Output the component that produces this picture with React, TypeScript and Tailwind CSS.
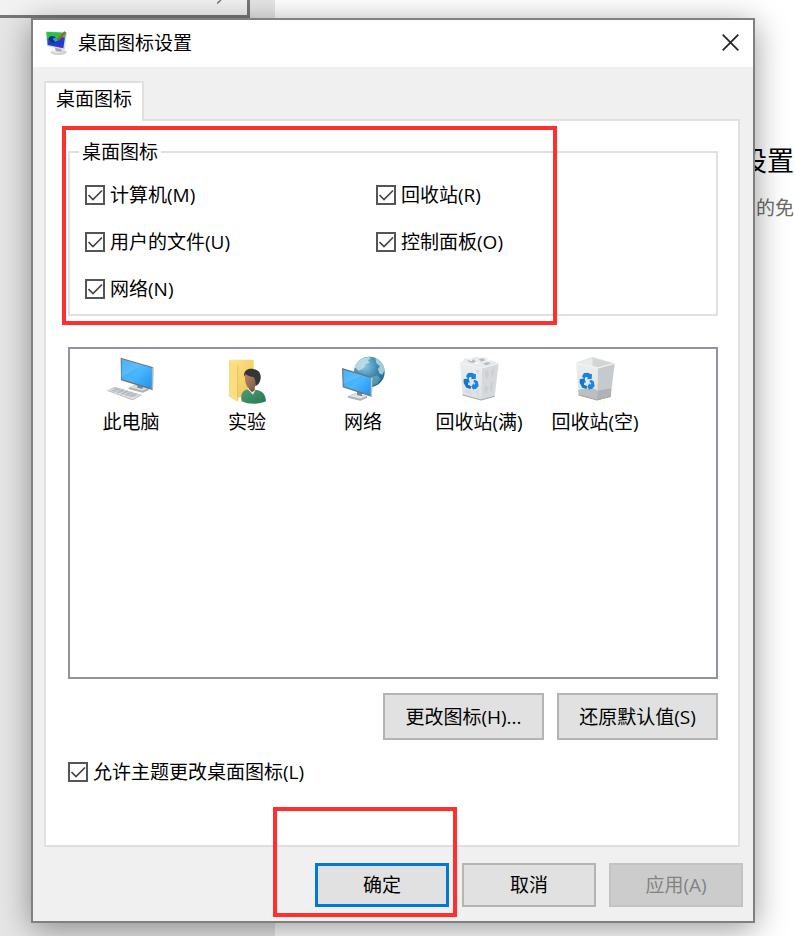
import { useState } from 'react';
import type { ReactNode } from 'react';

const desktopIcons = [
  { id: 'computer', label: '计算机(M)' },
  { id: 'recycle', label: '回收站(R)' },
  { id: 'files', label: '用户的文件(U)' },
  { id: 'control', label: '控制面板(O)' },
  { id: 'network', label: '网络(N)' },
];

function TitleIcon() {
  return (
    <svg width="24" height="26" viewBox="135 86 72 78" aria-hidden="true">
      <defs>
        <linearGradient id="title-screen" x1="0" y1="0" x2="1" y2="1">
          <stop offset="0" stopColor="#1c9a4a" />
          <stop offset="0.45" stopColor="#1a3fc0" />
          <stop offset="1" stopColor="#3a35e0" />
        </linearGradient>
      </defs>
      <ellipse cx="176" cy="153" rx="24" ry="8" fill="#cfcfcf" />
      <ellipse cx="173" cy="150" rx="17" ry="5" fill="#ececec" />
      <path d="M164 138l20 4 2 9-18-1z" fill="#a9a9a9" />
      <path d="M137 90l64 2-7 54-53-12z" fill="#d4dadb" />
      <path d="M140 93l57 2-7 46-47-10z" fill="url(#title-screen)" />
      <path d="M140 93l57 2-2 14-15-2-12 9-12-6-15 2z" fill="#25c83b" />
      <path d="M148 107c8-6 18-2 19 3-9-1-9 7-1 9 5 2 0 7-7 5-10-2-16-11-11-17z" fill="#14289a" />
      <path d="M158 112l10-2 8 7-11 5z" fill="#23a4c8" />
      <path d="M171 114l22-24 5 3-20 24z" fill="#b8562a" />
    </svg>
  );
}

function Screen({ id, points }: { id: string; points: [string, string, string] }) {
  return (
    <>
      <defs>
        <linearGradient id={id} x1="0" y1="0" x2="1" y2="1">
          <stop offset="0" stopColor="#2da5f6" />
          <stop offset="0.5" stopColor="#4ab7ff" />
          <stop offset="1" stopColor="#1e94ed" />
        </linearGradient>
      </defs>
      <polygon points={points[0]} fill="#69757f" />
      <polygon points={points[1]} fill={`url(#${id})`} />
      <polygon points={points[2]} fill="#fff" opacity="0.13" />
    </>
  );
}

function ComputerIcon() {
  return (
    <svg width="48" height="48" viewBox="48 33 144 144" aria-hidden="true">
      <path d="M113 128l18-9 42 11v6l-18 7-42-11z" fill="#aab1b6" />
      <path d="M115 127l17-7 39 10-17 7z" fill="#d9dddf" />
      <path d="M139 119l16 4v9l-16-4z" fill="#7f898f" />
      <Screen
        id="computer-screen"
        points={[
          '89,38 187,67 186,136 90,106',
          '92,42 183,69 182,130 92,102',
          '92,42 155,61 92,95',
        ]}
      />
      <path d="M183 68l4-1-1 69-4-3z" fill="#aeb9c0" />
      <path d="M48 137l22-12 83 25-28 16z" fill="#b5babd" />
      <path d="M51 136l19-9 79 23-24 13z" fill="#e3e5e6" />
      <path
        d="M58 134l71 22M64 131l72 22M70 129l72 22M65 140l18-10M78 144l20-11M91 148l20-11M104 152l20-11M116 156l20-11"
        stroke="#a0a6aa"
        strokeWidth="2"
        fill="none"
      />
    </svg>
  );
}

function UserFolderIcon() {
  return (
    <svg width="48" height="48" viewBox="399 33 144 144" aria-hidden="true">
      <defs>
        <linearGradient id="folder-back" x1="0" y1="0" x2="1" y2="1">
          <stop offset="0" stopColor="#ffe592" />
          <stop offset="1" stopColor="#efc14d" />
        </linearGradient>
        <linearGradient id="user-coat" x1="0" y1="0" x2="1" y2="1">
          <stop offset="0" stopColor="#529b74" />
          <stop offset="1" stopColor="#237a52" />
        </linearGradient>
        <linearGradient id="user-face" x1="0" y1="0" x2="1" y2="1">
          <stop offset="0" stopColor="#b48a68" />
          <stop offset="1" stopColor="#7f5c45" />
        </linearGradient>
      </defs>
      <path d="M418 44h73v113h-54l-19-3z" fill="url(#folder-back)" />
      <path d="M417 45l25 14v112l-25-17z" fill="#fbdc80" />
      <path d="M442 59l3 2v101l-3 9z" fill="#e6bd5a" />
      <path d="M455 169c-4-14 0-30 11-34l16-4 18 4c18 3 27 14 28 34-20 10-53 10-73 0z" fill="url(#user-coat)" />
      <path d="M472 131l27-1-10 19z" fill="#e4ece6" />
      <path d="M477 123h17v13l-8 6-9-10z" fill="#7d543b" />
      <path d="M465 91c1-12 33-12 35 4 1 20-4 37-16 37-13 0-20-17-19-41z" fill="url(#user-face)" />
      <path d="M462 88c3-15 18-19 30-15 17 2 23 17 19 32-2 10-8 15-15 19 2-10 0-22-5-28-9-1-19-3-24-9l-3 8z" fill="#333537" />
    </svg>
  );
}

function NetworkIcon() {
  return (
    <svg width="48" height="48" viewBox="57 33 144 144" aria-hidden="true">
      <defs>
        <radialGradient id="globe" cx="0.35" cy="0.3" r="0.8">
          <stop offset="0" stopColor="#8fc8df" />
          <stop offset="0.5" stopColor="#3f8db1" />
          <stop offset="1" stopColor="#1f6286" />
        </radialGradient>
      </defs>
      <circle cx="148" cy="81" r="46" fill="url(#globe)" />
      <path d="M104 67c7-18 22-29 41-31l8 4-9 6 5 7-13 5-5 12-14 7z" fill="#c6e0e9" opacity="0.85" />
      <path d="M166 40c15 6 25 19 28 35l-7 14-9-4-4-14 6-7-11-9z" fill="#c3dde5" opacity="0.8" />
      <path d="M158 95l14-4 9 11-10 15-12 4z" fill="#8ebccb" opacity="0.45" />
      <path d="M84 154l20-9 37 8v6l-20 8-37-9z" fill="#aab2b7" />
      <path d="M87 153l18-7 34 8-18 7z" fill="#dfe3e5" />
      <path d="M111 140l15 3v11l-15-4z" fill="#7c878e" />
      <Screen
        id="network-screen"
        points={[
          '66,69 157,96 156,156 68,127',
          '70,74 153,99 152,150 71,124',
          '70,74 126,91 71,117',
        ]}
      />
      <path d="M153 98l5-2-2 60-4-3z" fill="#bdc6cb" />
    </svg>
  );
}

function BinIcon({ full = false }: { full?: boolean }) {
  const id = full ? 'bin-full' : 'bin-empty';
  return (
    <svg width="48" height="48" viewBox="75 33 144 144" aria-hidden="true">
      <defs>
        <linearGradient id={id} x1="0" y1="0" x2="0" y2="1">
          <stop offset="0" stopColor="#eceeef" />
          <stop offset="1" stopColor="#dddfe1" />
        </linearGradient>
      </defs>
      <path d="M90 53l66 16-3 97-55-15z" fill={`url(#${id})`} />
      <path d="M156 69l50-14-12 100-41 11z" fill={full ? '#d6d9db' : '#c6cacd'} />
      <path d="M90 53l50-17 66 19-50 14z" fill="#dfe0e1" />
      {full ? (
        <>
          <path d="M95 53l10-13 16 1 15-6 14 5 13-4 12 9 21 4-6 9-18 3-14 7-20-7-18 2z" fill="#e8eaeb" />
          <path d="M113 45l11 3 6-5 8 6-9 5-13-3zM146 42l13-2 6 6-11 4zM158 56l15-5 10 4-14 6z" fill="#b3bfbd" />
          <path d="M119 41l8 3-5 5zM138 50l13 5-15 3zM172 43l8 4-9 3z" fill="#fafbfb" />
          <path d="M164 80l10-4 3 15-8 13zM186 72l8-2-5 24-6-5zM166 120l9 8-6 20-6-9zM183 112l7-5-4 34-7-6z" fill="#cbcfd2" />
          <path d="M136 74l12 2-3 14zM104 136l14-3 9 14-20-5zM134 137l12-4 1 22z" fill="#d7dbdd" />
        </>
      ) : (
        <>
          <path d="M140 39l-42 14 42 10z" fill="#eaebeb" />
          <path d="M140 39l58 16-40 11-18-4z" fill="#d2d4d5" />
          <path d="M97 134l43-6 15 9-1 29-56-15z" fill="#bcbec1" />
          <path d="M155 137l41-7-2 25-41 11z" fill="#afb2b5" />
        </>
      )}
      <path d="M90 53l66 16 50-14" stroke="#f5f6f6" strokeWidth="3" fill="none" />
      <path d="M98 150l55 15 41-11" stroke="#a5a8aa" strokeWidth="3" fill="none" />
      <path d="M108 94l6-10 12-1 9 5 3-2-1 16-14 1 3-5-6-3-5 7z" fill="#1683dc" />
      <path d="M101 103l14-3 5 13-5-1-1 7 9 4-1 9-13-4-8-14z" fill="#0f78d1" />
      <path d="M134 104l9 5 3 14-8 9-7 0 0 4-7-11 7-11 1 5 4-3-6-7z" fill="#1a87df" />
    </svg>
  );
}

const previews: { label: string; icon: ReactNode }[] = [
  { label: '此电脑', icon: <ComputerIcon /> },
  { label: '实验', icon: <UserFolderIcon /> },
  { label: '网络', icon: <NetworkIcon /> },
  { label: '回收站(满)', icon: <BinIcon full /> },
  { label: '回收站(空)', icon: <BinIcon /> },
];

function Checkbox({ id, label }: { id: string; label: string }) {
  const [checked, setChecked] = useState(true);

  return (
    <div className="flex items-center gap-[5px]">
      <span className="grid size-5 shrink-0">
        <input
          id={id}
          type="checkbox"
          checked={checked}
          onChange={(e) => setChecked(e.target.checked)}
          className="peer col-start-1 row-start-1 size-5 appearance-none border-2 border-[#555] bg-white"
        />
        <svg
          viewBox="0 0 20 20"
          className="pointer-events-none invisible col-start-1 row-start-1 size-5 peer-checked:visible"
          aria-hidden="true"
        >
          <path d="M3.500 10l4.500 4.500L17 5.500" fill="none" stroke="#444" strokeWidth="1.700" />
        </svg>
      </span>
      <label htmlFor={id} className="whitespace-nowrap">{label}</label>
    </div>
  );
}

function Backdrop() {
  return (
    <div className="absolute inset-0 flex overflow-hidden" aria-hidden="true">
      <div className="w-[275px] shrink-0 bg-[#e6e6e6]">
        <div className="mr-[25px] flex h-[18px] justify-end border-r-3 border-b-3 border-[#777] bg-[#f2f2f2] pr-[25px]">
          <svg width="5" height="4" viewBox="0 0 5 4">
            <path d="M0 3.500L4 0" stroke="#777" strokeWidth="1.500" />
          </svg>
        </div>
      </div>
      <div className="flex-1 bg-white pt-[143px] text-right">
        <p className="text-[27px] leading-9">设置</p>
        <p className="mt-[17px] text-[#6b6b6b]">的免</p>
      </div>
    </div>
  );
}

export default function App() {
  return (
    <div className="relative min-h-screen overflow-hidden bg-white font-['Open_Sans','Noto_Sans_CJK_SC',sans-serif] text-[19px] leading-6 text-black">
      <Backdrop />
      <div
        role="dialog"
        aria-labelledby="dialog-title"
        className="relative mt-[18px] mr-[39px] mb-[13px] ml-[31px] border-2 border-[#808080] bg-[#f0f0f0] shadow-[0_6px_30px_rgba(0,0,0,0.4)]"
      >
        <header className="flex h-[47px] items-center gap-[9px] bg-white pr-[14px] pb-[2px] pl-3">
          <TitleIcon />
          <h1 id="dialog-title" className="flex-1">桌面图标设置</h1>
          <button type="button" aria-label="关闭">
            <svg width="17" height="17" viewBox="0 0 17 17">
              <path d="M0.700 0.700l15.600 15.600M16.300 0.700L0.700 16.300" stroke="#222" strokeWidth="1.700" />
            </svg>
          </button>
        </header>

        <div className="pt-[14px] pr-[13px] pl-[11px]">
          <div role="tablist" className="flex">
            <button
              type="button"
              role="tab"
              aria-selected="true"
              className="relative z-10 -mb-[2px] border-2 border-b-0 border-[#e0e0e0] bg-white px-[10px] pt-1 pb-[10px]"
            >
              桌面图标
            </button>
          </div>

          <div role="tabpanel" className="border-2 border-[#e0e0e0] bg-white pt-[19px] pr-5 pb-[61px] pl-[22px]">
            <div className="relative">
              <fieldset className="min-w-0 border-2 border-[#e0e0e0] pb-[13px] pl-[9px]">
                <legend className="px-[3px]">桌面图标</legend>
                <div className="grid grid-cols-[291px_1fr] gap-y-[23px] pt-[19px] pl-[6px]">
                  {desktopIcons.map((item) => (
                    <Checkbox key={item.id} id={item.id} label={item.label} />
                  ))}
                </div>
              </fieldset>
              <div className="pointer-events-none absolute -top-[14px] right-[161px] -bottom-[9px] -left-[6px] border-4 border-[#ff2f2f]" />
            </div>

            <ul className="mt-[31px] flex h-[332px] flex-wrap content-start border-2 border-[#8f949c] pt-[7px] pl-[3px]">
              {previews.map((item) => (
                <li key={item.label} className="flex w-[116px] flex-col items-center gap-[6px]">
                  {item.icon}
                  <span>{item.label}</span>
                </li>
              ))}
            </ul>

            <div className="mt-[14px] flex justify-end gap-[13px]">
              <button type="button" className="h-[47px] w-[161px] border-2 border-[#b4b4b4] bg-[#e1e1e1]">
                更改图标(H)...
              </button>
              <button type="button" className="h-[47px] w-[161px] border-2 border-[#b4b4b4] bg-[#e1e1e1]">
                还原默认值(S)
              </button>
            </div>

            <div className="mt-5">
              <Checkbox id="allow-themes" label="允许主题更改桌面图标(L)" />
            </div>
          </div>
        </div>

        <footer className="flex justify-end gap-[13px] pt-4 pr-[10px] pb-[14px]">
          <div className="relative z-10">
            <button type="button" className="h-11 w-[134px] border-3 border-[#0078d7] bg-[#e1e1e1]">
              确定
            </button>
            <div className="pointer-events-none absolute -top-14 -right-2 -bottom-[10px] -left-[42px] border-4 border-[#ff2f2f]" />
          </div>
          <button type="button" className="h-11 w-[134px] border-2 border-[#b4b4b4] bg-[#e1e1e1]">
            取消
          </button>
          <button type="button" disabled className="h-11 w-[134px] border-2 border-[#c3c3c3] bg-[#ccc] text-[#838383]">
            应用(A)
          </button>
        </footer>
      </div>
    </div>
  );
}
